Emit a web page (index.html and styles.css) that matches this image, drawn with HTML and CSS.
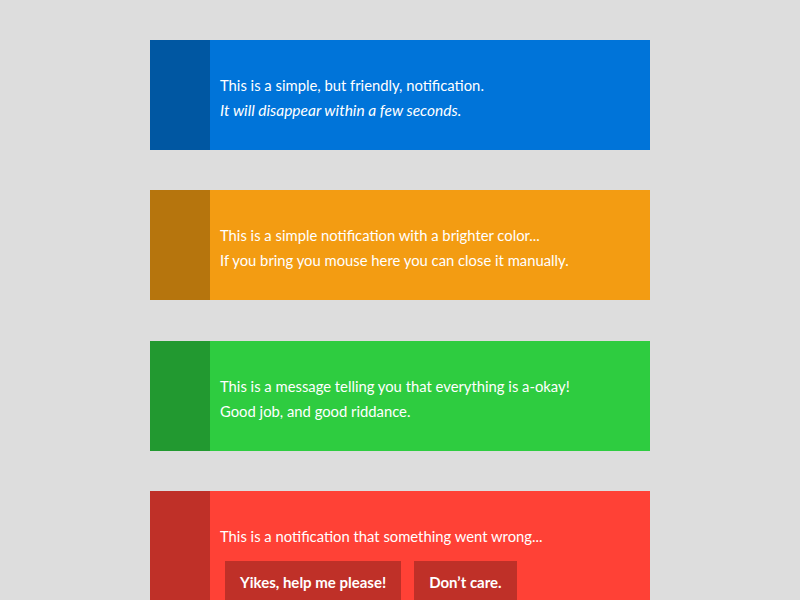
FILE: index.html
```html
<!DOCTYPE html>
<html lang="en">
<head>
<meta charset="utf-8">
<title>Notifications</title>
<link rel="stylesheet" href="styles.css">
</head>
<body>
<main class="stack">
  <section class="note note-blue">
    <div class="note-strip"></div>
    <div class="note-body">
      <p class="line">This is a simple, but friendly, notification.</p>
      <p class="line line-em">It will disappear within a few seconds.</p>
    </div>
  </section>
  <section class="note note-orange">
    <div class="note-strip"></div>
    <div class="note-body">
      <p class="line">This is a simple notification with a brighter color...</p>
      <p class="line">If you bring you mouse here you can close it manually.</p>
    </div>
  </section>
  <section class="note note-green">
    <div class="note-strip"></div>
    <div class="note-body">
      <p class="line">This is a message telling you that everything is a-okay!</p>
      <p class="line">Good job, and good riddance.</p>
    </div>
  </section>
  <section class="note note-red">
    <div class="note-strip"></div>
    <div class="note-body">
      <p class="line">This is a notification that something went wrong...</p>
      <div class="actions">
        <button class="btn">Yikes, help me please!</button>
        <button class="btn">Don’t care.</button>
      </div>
    </div>
  </section>
</main>
</body>
</html>
```

FILE: styles.css
```css
html, body {
  margin: 0;
  padding: 0;
  background: #dddddd;
  font-family: "Lato", "Open Sans", sans-serif;
}
.stack {
  width: 500px;
  margin: 0 auto;
  padding-top: 40px;
}
.note {
  display: flex;
  margin-bottom: 40.4px;
  color: #ffffff;
}
.note-blue { background: #0074d9; }
.note-orange { background: #f39c12; }
.note-green { background: #2ecc40; }
.note-red { background: #ff4136; }
.note-strip {
  width: 60px;
  flex: none;
  background: rgba(0, 0, 0, 0.25);
}
.note-body {
  flex: 1;
  padding: 33px 10px 27px;
}
.line {
  margin: 0;
  font-size: 14.8px;
  line-height: 25px;
  font-weight: 400;
}
.line-em {
  font-style: italic;
  font-size: 15.5px;
}
.actions {
  display: flex;
  gap: 13px;
  padding-left: 5px;
  margin-top: 12px;
}
.btn {
  border: 0;
  margin: 0;
  background: rgba(0, 0, 0, 0.25);
  color: #ffffff;
  font-family: inherit;
  font-size: 15px;
  font-weight: 700;
  line-height: 24px;
  padding: 9px 15px;
}
```
